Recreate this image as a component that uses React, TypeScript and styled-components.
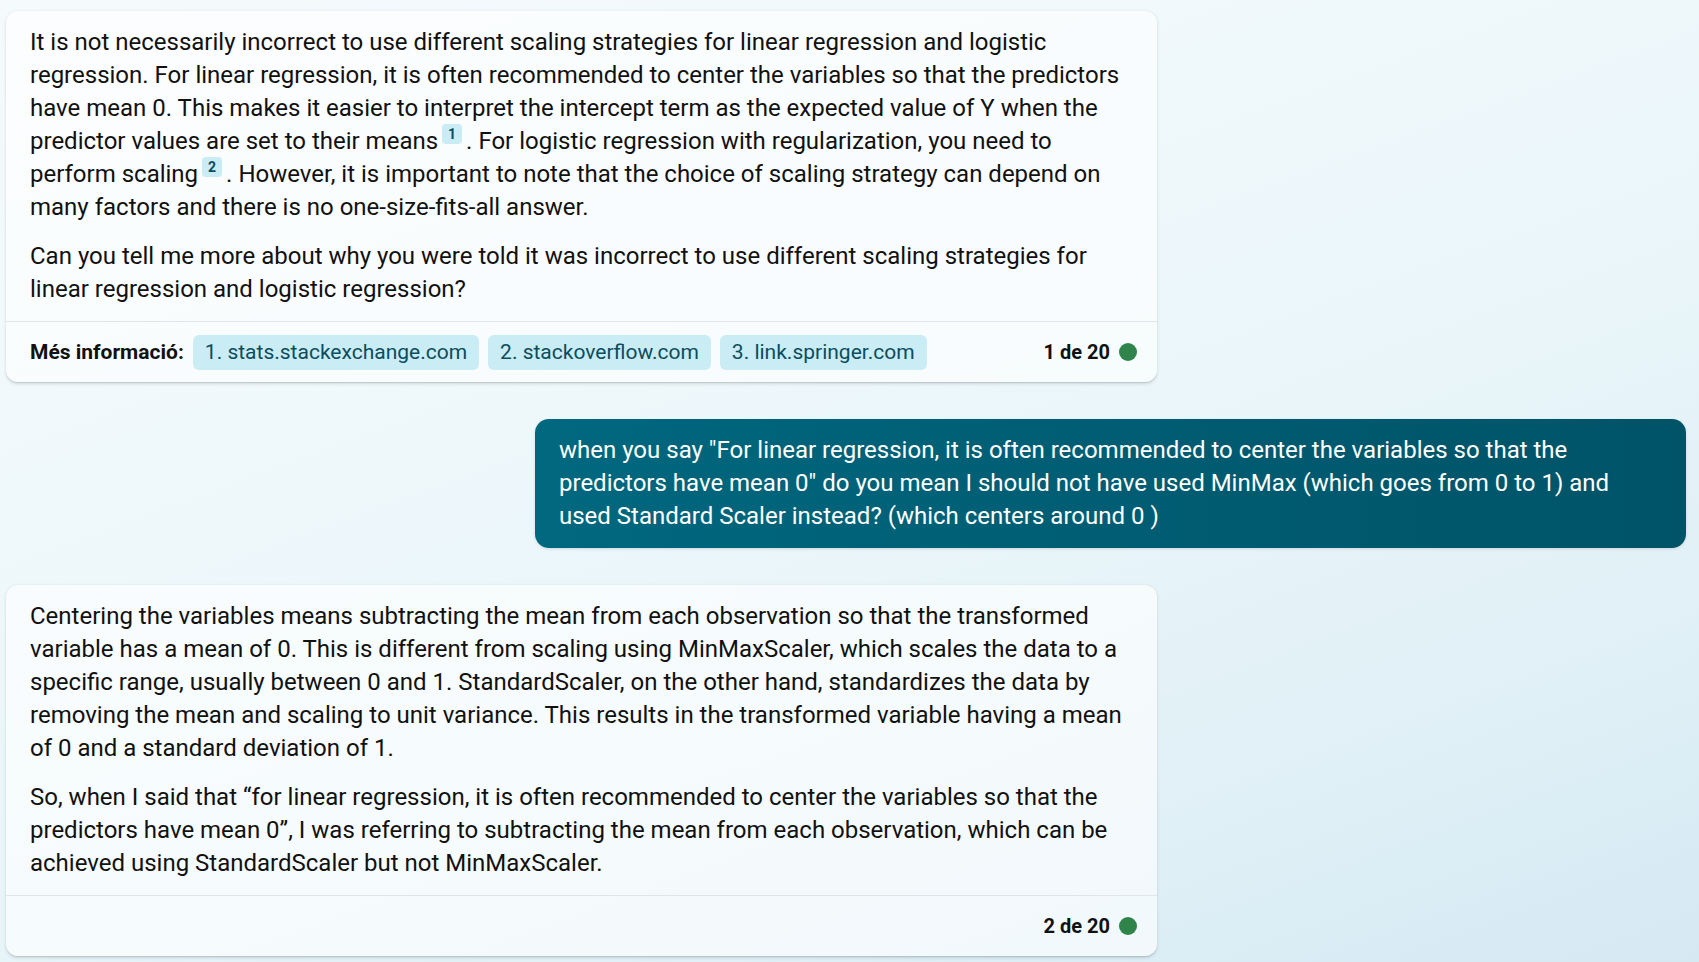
import React from 'react';
import styled, { createGlobalStyle } from 'styled-components';

const GlobalStyle = createGlobalStyle`
  html, body {
    margin: 0;
    padding: 0;
    height: 100%;
  }
  body {
    font-family: Roboto, "Liberation Sans", Arial, sans-serif;
    color: #111;
    background: linear-gradient(160deg, #f5fafc 0%, #eef8fb 40%, #e2f1f7 75%, #d5e9f3 100%);
    background-attachment: fixed;
    overflow: hidden;
  }
`;

const Page = styled.div`
  display: flex;
  flex-direction: column;
  gap: 37px;
  padding: 11px 13px 0 6px;
  min-height: 962px;
  box-sizing: border-box;
`;

const Card = styled.div`
  align-self: flex-start;
  width: 1151px;
  box-sizing: border-box;
  background: rgba(255, 255, 255, 0.62);
  border-radius: 12px;
  box-shadow: 0 0.3px 0.9px rgba(0, 0, 0, 0.1), 0 1.6px 3.6px rgba(0, 0, 0, 0.12);
  overflow: hidden;
`;

const Body = styled.div`
  padding: 15px 24px 15px 24px;
`;

const Para = styled.p`
  margin: 0;
  font-size: 24px;
  line-height: 33px;
  color: #111;

  & + & {
    margin-top: 16px;
  }
`;

const Ref = styled.span`
  display: inline-block;
  vertical-align: top;
  transform: translateY(-1px);
  min-width: 20px;
  height: 20px;
  line-height: 20px;
  margin: 0 4px;
  border-radius: 4px;
  background: #c9ecf5;
  color: #0b4d5e;
  font-size: 14px;
  font-weight: 700;
  text-align: center;
`;

const Footer = styled.div`
  display: flex;
  align-items: center;
  gap: 9px;
  min-height: 61px;
  box-sizing: border-box;
  padding: 0 20px 0 24px;
  border-top: 1px solid #e1e5e7;
`;

const Label = styled.span`
  font-size: 21px;
  font-weight: 700;
  color: #111;
`;

const Chip = styled.a`
  display: inline-flex;
  align-items: center;
  height: 35px;
  padding: 0 12px;
  border-radius: 6px;
  background: #c9ecf5;
  color: #0b4d5e;
  font-size: 21px;
  text-decoration: none;
`;

const Counter = styled.div`
  margin-left: auto;
  display: flex;
  align-items: center;
  gap: 9px;
  font-size: 20px;
  font-weight: 700;
  color: #111;
`;

const Dot = styled.span`
  width: 18px;
  height: 18px;
  border-radius: 50%;
  background: #2e844a;
`;

const UserBubble = styled.div`
  align-self: flex-end;
  width: 1151px;
  box-sizing: border-box;
  padding: 15px 24px;
  border-radius: 14px;
  background: linear-gradient(90deg, #00687f 0%, #005d73 50%, #005367 100%);
  color: #fff;
  font-size: 24px;
  line-height: 33px;
  box-shadow: 0 1px 3px rgba(0, 0, 0, 0.12);
`;

const sources = ['1. stats.stackexchange.com', '2. stackoverflow.com', '3. link.springer.com'];

export default function App() {
  return (
    <>
      <GlobalStyle />
      <Page>
        <Card>
          <Body>
            <Para>
              It is not necessarily incorrect to use different scaling strategies for linear regression and logistic
              regression. For linear regression, it is often recommended to center the variables so that the predictors
              have mean 0. This makes it easier to interpret the intercept term as the expected value of Y when the
              predictor values are set to their means<Ref>1</Ref>. For logistic regression with regularization, you need to
              perform scaling<Ref>2</Ref>. However, it is important to note that the choice of scaling strategy can depend on
              many factors and there is no one-size-fits-all answer.
            </Para>
            <Para>
              Can you tell me more about why you were told it was incorrect to use different scaling strategies for
              linear regression and logistic regression?
            </Para>
          </Body>
          <Footer>
            <Label>Més informació:</Label>
            {sources.map(s => (
              <Chip key={s}>{s}</Chip>
            ))}
            <Counter>
              1 de 20 <Dot />
            </Counter>
          </Footer>
        </Card>

        <UserBubble>
          when you say "For linear regression, it is often recommended to center the variables so that the predictors
          have mean 0" do you mean I should not have used MinMax (which goes from 0 to 1) and used Standard Scaler
          instead? (which centers around 0 )
        </UserBubble>

        <Card>
          <Body>
            <Para>
              Centering the variables means subtracting the mean from each observation so that the transformed
              variable has a mean of 0. This is different from scaling using MinMaxScaler, which scales the data to a
              specific range, usually between 0 and 1. StandardScaler, on the other hand, standardizes the data by
              removing the mean and scaling to unit variance. This results in the transformed variable having a mean
              of 0 and a standard deviation of 1.
            </Para>
            <Para>
              So, when I said that “for linear regression, it is often recommended to center the variables so that the
              predictors have mean 0”, I was referring to subtracting the mean from each observation, which can be
              achieved using StandardScaler but not MinMaxScaler.
            </Para>
          </Body>
          <Footer>
            <Counter>
              2 de 20 <Dot />
            </Counter>
          </Footer>
        </Card>
      </Page>
    </>
  );
}
